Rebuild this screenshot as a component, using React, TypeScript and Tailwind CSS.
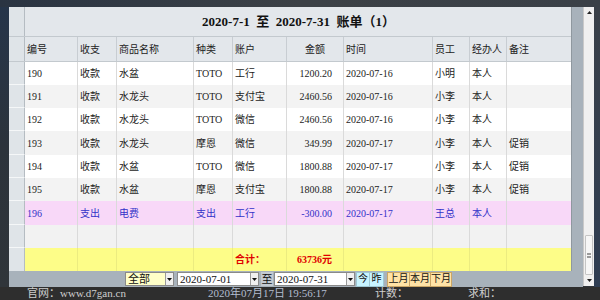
const cols = "grid grid-cols-[16px_53px_39px_77px_39px_54px_57px_89px_37px_37px_65px]";

type Row = {
  id: string;
  kind: string;
  name: string;
  cat: string;
  acct: string;
  amount: string;
  date: string;
  staff: string;
  agent: string;
  note: string;
};

const rows: Row[] = [
  { id: "190", kind: "收款", name: "水盆", cat: "TOTO", acct: "工行", amount: "1200.20", date: "2020-07-16", staff: "小明", agent: "本人", note: "" },
  { id: "191", kind: "收款", name: "水龙头", cat: "TOTO", acct: "支付宝", amount: "2460.56", date: "2020-07-16", staff: "小李", agent: "本人", note: "" },
  { id: "192", kind: "收款", name: "水龙头", cat: "TOTO", acct: "微信", amount: "2460.56", date: "2020-07-16", staff: "小李", agent: "本人", note: "" },
  { id: "193", kind: "收款", name: "水龙头", cat: "摩恩", acct: "微信", amount: "349.99", date: "2020-07-17", staff: "小李", agent: "本人", note: "促销" },
  { id: "194", kind: "收款", name: "水盆", cat: "TOTO", acct: "微信", amount: "1800.88", date: "2020-07-17", staff: "小李", agent: "本人", note: "促销" },
  { id: "195", kind: "收款", name: "水盆", cat: "摩恩", acct: "支付宝", amount: "1800.88", date: "2020-07-17", staff: "小李", agent: "本人", note: "促销" },
  { id: "196", kind: "支出", name: "电费", cat: "支出", acct: "工行", amount: "-300.00", date: "2020-07-17", staff: "王总", agent: "本人", note: "" },
];

const heights = ["h-[23px]", "h-[23px]", "h-[23px]", "h-[24px]", "h-[23px]", "h-[23px]", "h-[24px]"];
const bgs = ["bg-white", "bg-[#f3f3f3]", "bg-white", "bg-[#f3f3f3]", "bg-white", "bg-[#f3f3f3]", "bg-[#f8d8f8]"];

const cell = "flex items-center px-[2px] border-r border-[#dadada] whitespace-nowrap overflow-hidden";
const sel = "bg-[#dfe4e8] border-r border-[#b5bcc2] border-b border-b-[#f5f7f8]";

function DropBtn() {
  return (
    <div className="w-[8px] h-[12px] bg-[#f0f0f0] border-l border-[#9a9a9a] flex items-center justify-center">
      <svg width="5" height="3" viewBox="0 0 5 3">
        <path d="M0 0h5L2.5 3z" fill="#111" />
      </svg>
    </div>
  );
}

function Cells({ r }: { r: Row }) {
  return (
    <>
      <div className={cell}>{r.id}</div>
      <div className={cell}>{r.kind}</div>
      <div className={cell}>{r.name}</div>
      <div className={cell}>{r.cat}</div>
      <div className={cell}>{r.acct}</div>
      <div className={cell + " justify-end pr-[11px]"}>{r.amount}</div>
      <div className={cell}>{r.date}</div>
      <div className={cell}>{r.staff}</div>
      <div className={cell}>{r.agent}</div>
      <div className={cell + " border-r-0"}>{r.note}</div>
    </>
  );
}

export default function App() {
  const headers = ["编号", "收支", "商品名称", "种类", "账户", "金额", "时间", "员工", "经办人", "备注"];
  return (
    <div className="w-[600px] h-[300px] overflow-hidden flex flex-col bg-[#30353a] font-['Liberation_Serif','Noto_Sans_CJK_SC',serif] text-[10px] text-[#1c1c1c]">
      <div className="h-[7px] shrink-0 bg-gradient-to-r from-[#2a3442] via-[#3c4146] to-[#3a4047]" />
      <div className="flex h-[280px] shrink-0">
        <div className="w-[9px] bg-gradient-to-b from-[#26354a] via-[#2c333b] to-[#30353a]" />
        <div className="w-[574px] flex flex-col bg-[#a8b2bb]">
          <div className="flex h-[264px]">
            <div className="w-[563px] flex flex-col border-r border-[#8f989f]">
              {/* title */}
              <div className={cols + " h-[30px] bg-[#e3e7eb] border-b border-[#c3c9ce]"}>
                <div className="bg-[#dfe4e8] border-r border-[#b5bcc2]" />
                <div className="col-span-10 flex items-center justify-center font-bold text-[13px] text-[#111] whitespace-pre">
                  2020-7-1  至  2020-7-31  账单（1）
                </div>
              </div>
              {/* header */}
              <div className={cols + " h-[25px] bg-[#e3e7eb] border-b border-[#c3c9ce] text-[#222]"}>
                <div className="bg-[#dfe4e8] border-r border-[#b5bcc2]" />
                {headers.map((h, i) => (
                  <div
                    key={h}
                    className={
                      "flex items-center px-[2px] border-r border-[#c8cdd2] " +
                      (i === 5 ? "justify-center" : "") +
                      (i === 9 ? " border-r-0" : "")
                    }
                  >
                    {h}
                  </div>
                ))}
              </div>
              {rows.map((r, i) => (
                <div
                  key={r.id}
                  className={cols + " " + heights[i] + " " + bgs[i] + (i === 6 ? " text-[#3232c8]" : "")}
                >
                  <div className={sel} />
                  <Cells r={r} />
                </div>
              ))}
              {/* empty row */}
              <div className={cols + " h-[23px] bg-[#f2f2f2]"}>
                <div className={sel} />
                {Array.from({ length: 10 }).map((_, i) => (
                  <div key={i} className={cell + (i === 9 ? " border-r-0" : "")} />
                ))}
              </div>
              {/* total row */}
              <div className={cols + " h-[23px] bg-[#fdfd88] text-[#e00000] font-bold"}>
                <div className="bg-[#dfe4e8] border-r border-[#b5bcc2]" />
                <div className="border-r border-[#ecec80]" />
                <div className="border-r border-[#ecec80]" />
                <div className="border-r border-[#ecec80]" />
                <div className="border-r border-[#ecec80]" />
                <div className="flex items-center px-[2px] border-r border-[#ecec80]">合计：</div>
                <div className="flex items-center justify-end pr-[11px] border-r border-[#ecec80]">63736元</div>
                <div className="border-r border-[#ecec80]" />
                <div className="border-r border-[#ecec80]" />
                <div className="border-r border-[#ecec80]" />
                <div />
              </div>
            </div>
            <div className="flex-1" />
          </div>
          {/* toolbar */}
          <div className="h-[16px] flex items-center text-[11px] text-[#111]">
            <div className="ml-[116px] w-[49px] h-[14px] flex items-center justify-between bg-[#ffffc8] border border-[#8a8a8a]">
              <span className="pl-[2px] leading-none">全部</span>
              <DropBtn />
            </div>
            <div className="ml-[3px] w-[82px] h-[14px] flex items-center justify-between bg-white border border-[#8a8a8a]">
              <span className="pl-[2px] leading-none">2020-07-01</span>
              <DropBtn />
            </div>
            <div className="ml-[2px] w-[12px] h-[14px] flex items-center justify-center bg-[#c3cad1] leading-none">至</div>
            <div className="ml-[1px] w-[81px] h-[14px] flex items-center justify-between bg-white border border-[#8a8a8a]">
              <span className="pl-[2px] leading-none">2020-07-31</span>
              <DropBtn />
            </div>
            <div className="ml-[1px] w-[14px] h-[15px] flex items-center justify-center bg-[#c8f4ff] border border-[#9fc8d4] text-[10px] leading-none">今</div>
            <div className="w-[14px] h-[15px] flex items-center justify-center bg-[#c8f4ff] border border-[#9fc8d4] border-l-0 text-[10px] leading-none">昨</div>
            <div className="ml-[3px] w-[23px] h-[15px] flex items-center justify-center bg-[#ffe3a6] border border-[#caa666] text-[10px] leading-none">上月</div>
            <div className="w-[21px] h-[15px] flex items-center justify-center bg-[#ffe3a6] border border-[#caa666] border-l-0 text-[10px] leading-none">本月</div>
            <div className="w-[21px] h-[15px] flex items-center justify-center bg-[#ffe3a6] border border-[#caa666] border-l-0 text-[10px] leading-none">下月</div>
          </div>
        </div>
        {/* scrollbar */}
        <div className="w-[11px] h-[279px] flex flex-col bg-[#f0f0f0] border-l border-[#c9c9c9]">
          <div className="h-[11px] flex items-center justify-center">
            <svg width="5" height="3" viewBox="0 0 5 3">
              <path d="M0 3h5L2.5 0z" fill="#222" />
            </svg>
          </div>
          <div className="flex-1" />
          <div className="h-[40px] mx-[1px] bg-[#f6f6f6] border border-[#c4c4c4] rounded-[1px] flex items-center justify-center">
            <div className="w-[4px] h-[5px] border-y-2 border-[#9a9a9a]" />
          </div>
          <div className="h-[11px] flex items-center justify-center">
            <svg width="5" height="3" viewBox="0 0 5 3">
              <path d="M0 0h5L2.5 3z" fill="#222" />
            </svg>
          </div>
        </div>
        <div className="flex-1 bg-gradient-to-b from-[#3a4048] to-[#2f3d52]" />
      </div>
      {/* status bar */}
      <div className="h-[13px] flex items-center text-[11px] leading-none bg-[#2e2e2e] text-[#cfcfcf]">
        <div className="ml-[27px] w-[181px]">官网：www.d7gan.cn</div>
        <div className="w-[167px] text-[#b3bdd0]">2020年07月17日 19:56:17</div>
        <div className="w-[93px]">计数：</div>
        <div>求和：</div>
      </div>
    </div>
  );
}
